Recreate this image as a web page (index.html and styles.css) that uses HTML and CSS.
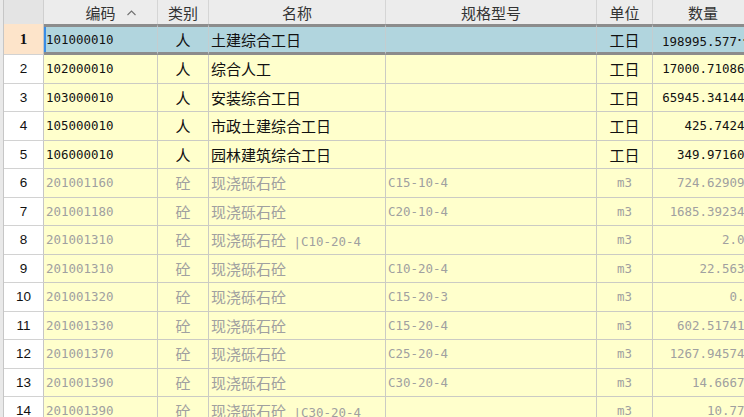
FILE: index.html
```html
<!DOCTYPE html>
<html lang="zh-CN">
<head>
<meta charset="utf-8">
<title>人材机汇总</title>
<link rel="stylesheet" href="styles.css">
</head>
<body>
<div class="page">
  <div class="strip"></div>
  <div class="grid">
    <div class="row hdr">
      <div class="h corner"></div>
      <div class="h sortable">编码<svg class="caret" width="9" height="6" viewBox="0 0 9 6"><path d="M0.5 5 L4.5 1 L8.5 5" fill="none" stroke="#707070" stroke-width="1.1"/></svg></div>
      <div class="h">类别</div>
      <div class="h">名称</div>
      <div class="h">规格型号</div>
      <div class="h">单位</div>
      <div class="h">数量</div>
    </div>

    <div class="row sel">
      <div class="num">1</div>
      <div class="c code first">101000010</div>
      <div class="c cat">人</div>
      <div class="c name">土建综合工日</div>
      <div class="c spec"></div>
      <div class="c unit">工日</div>
      <div class="c qty"><span>198995.577<span class="ell">…</span></span></div>
    </div>

    <div class="row">
      <div class="num">2</div>
      <div class="c code">102000010</div>
      <div class="c cat">人</div>
      <div class="c name">综合人工</div>
      <div class="c spec"></div>
      <div class="c unit">工日</div>
      <div class="c qty">17000.710863</div>
    </div>

    <div class="row">
      <div class="num">3</div>
      <div class="c code">103000010</div>
      <div class="c cat">人</div>
      <div class="c name">安装综合工日</div>
      <div class="c spec"></div>
      <div class="c unit">工日</div>
      <div class="c qty">65945.341449</div>
    </div>

    <div class="row">
      <div class="num">4</div>
      <div class="c code">105000010</div>
      <div class="c cat">人</div>
      <div class="c name">市政土建综合工日</div>
      <div class="c spec"></div>
      <div class="c unit">工日</div>
      <div class="c qty">425.74245</div>
    </div>

    <div class="row">
      <div class="num">5</div>
      <div class="c code">106000010</div>
      <div class="c cat">人</div>
      <div class="c name">园林建筑综合工日</div>
      <div class="c spec"></div>
      <div class="c unit">工日</div>
      <div class="c qty">349.971603</div>
    </div>

    <div class="row dim">
      <div class="num">6</div>
      <div class="c code">201001160</div>
      <div class="c cat">砼</div>
      <div class="c name">现浇砾石砼</div>
      <div class="c spec">C15-10-4</div>
      <div class="c unit"><span class="m">m3</span></div>
      <div class="c qty">724.629096</div>
    </div>

    <div class="row dim">
      <div class="num">7</div>
      <div class="c code">201001180</div>
      <div class="c cat">砼</div>
      <div class="c name">现浇砾石砼</div>
      <div class="c spec">C20-10-4</div>
      <div class="c unit"><span class="m">m3</span></div>
      <div class="c qty">1685.392340</div>
    </div>

    <div class="row dim">
      <div class="num">8</div>
      <div class="c code">201001310</div>
      <div class="c cat">砼</div>
      <div class="c name"><span>现浇砾石砼<span class="m"> |C10-20-4</span></span></div>
      <div class="c spec"></div>
      <div class="c unit"><span class="m">m3</span></div>
      <div class="c qty">2.00</div>
    </div>

    <div class="row dim">
      <div class="num">9</div>
      <div class="c code">201001310</div>
      <div class="c cat">砼</div>
      <div class="c name">现浇砾石砼</div>
      <div class="c spec">C10-20-4</div>
      <div class="c unit"><span class="m">m3</span></div>
      <div class="c qty">22.5633</div>
    </div>

    <div class="row dim">
      <div class="num">10</div>
      <div class="c code">201001320</div>
      <div class="c cat">砼</div>
      <div class="c name">现浇砾石砼</div>
      <div class="c spec">C15-20-3</div>
      <div class="c unit"><span class="m">m3</span></div>
      <div class="c qty">0.7</div>
    </div>

    <div class="row dim">
      <div class="num">11</div>
      <div class="c code">201001330</div>
      <div class="c cat">砼</div>
      <div class="c name">现浇砾石砼</div>
      <div class="c spec">C15-20-4</div>
      <div class="c unit"><span class="m">m3</span></div>
      <div class="c qty">602.517419</div>
    </div>

    <div class="row dim">
      <div class="num">12</div>
      <div class="c code">201001370</div>
      <div class="c cat">砼</div>
      <div class="c name">现浇砾石砼</div>
      <div class="c spec">C25-20-4</div>
      <div class="c unit"><span class="m">m3</span></div>
      <div class="c qty">1267.945748</div>
    </div>

    <div class="row dim">
      <div class="num">13</div>
      <div class="c code">201001390</div>
      <div class="c cat">砼</div>
      <div class="c name">现浇砾石砼</div>
      <div class="c spec">C30-20-4</div>
      <div class="c unit"><span class="m">m3</span></div>
      <div class="c qty">14.66673</div>
    </div>

    <div class="row dim">
      <div class="num">14</div>
      <div class="c code">201001390</div>
      <div class="c cat">砼</div>
      <div class="c name"><span>现浇砾石砼<span class="m"> |C30-20-4</span></span></div>
      <div class="c spec"></div>
      <div class="c unit"><span class="m">m3</span></div>
      <div class="c qty">10.776</div>
    </div>
  </div>
</div>
</body>
</html>
```

FILE: styles.css
```css
html, body {
  margin: 0;
  padding: 0;
  background: #ffffff;
  overflow: hidden;
}

.page {
  display: flex;
  width: 760px;
  height: 417px;
  overflow: hidden;
}

.strip {
  flex: 0 0 4px;
  box-sizing: border-box;
  background: #e9e9e9;
  border-right: 1px solid #c6c6c6;
}

.grid {
  display: flex;
  flex-direction: column;
  flex: 0 0 auto;
}

.row {
  display: grid;
  grid-template-columns: 40px 114px 51px 177px 211px 56px 101px;
  height: 28.5px;
  flex: 0 0 auto;
}

/* header */
.hdr {
  height: 24px;
}

.h {
  box-sizing: border-box;
  background: #ececec;
  border-right: 1px solid #d5d5d5;
  display: flex;
  align-items: center;
  justify-content: center;
  font-family: "Noto Sans CJK SC", sans-serif;
  font-size: 15px;
  color: #333333;
  white-space: nowrap;
}

.h.corner {
  background: #e4e4e4;
  border-right-color: #cfcfcf;
}

.sortable {
  position: relative;
}

.caret {
  position: absolute;
  right: 21px;
  top: 10px;
}

/* row number column */
.num {
  box-sizing: border-box;
  background: #ffffff;
  border-right: 1px solid #c6c6c6;
  border-bottom: 1px solid #d2d2d2;
  display: flex;
  align-items: center;
  justify-content: center;
  font-family: "Liberation Sans", sans-serif;
  font-size: 13.5px;
  color: #111111;
}

/* data cells */
.c {
  box-sizing: border-box;
  background: #ffffcc;
  border-right: 1px solid #cbcbc4;
  border-bottom: 1px solid #cbcbc4;
  display: flex;
  align-items: center;
  white-space: nowrap;
  overflow: hidden;
  color: #111111;
  font-family: "Noto Sans CJK SC", sans-serif;
  font-size: 15px;
}

.m,
.code,
.spec,
.qty {
  font-family: "DejaVu Sans Mono", monospace;
  font-size: 12.45px;
}

.code {
  padding-left: 2px;
}

.name,
.spec {
  padding-left: 2px;
}

.cat,
.unit {
  justify-content: center;
}

.qty {
  justify-content: flex-end;
  padding-left: 8px;
  padding-right: 1px;
}

.ell {
  font-family: "Noto Sans CJK SC", sans-serif;
  font-size: 15px;
}

/* dimmed rows */
.dim .c {
  color: #a0a0a0;
}

/* selected row */
.sel {
  height: 31px;
}

.sel .num {
  background: #fde4ca;
  font-family: "Liberation Serif", serif;
  font-weight: bold;
  font-size: 15px;
}

.sel .c {
  background: #b1d5de;
  border-top: 3px solid #8c8c8c;
  border-bottom: 3px solid #8c8c8c;
  border-right-color: #c3cdd0;
}

.sel .first {
  box-shadow: inset 2px 0 0 #3a8de6;
}
```
